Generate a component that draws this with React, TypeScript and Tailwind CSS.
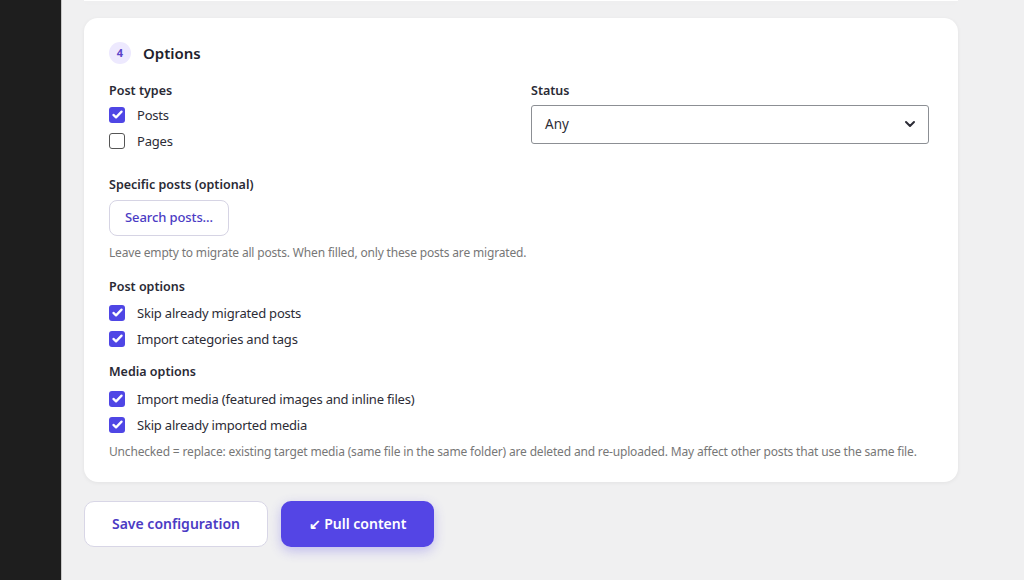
import React, { useState } from 'react';

const FONT = '"Noto Sans", "Open Sans", sans-serif';

interface CheckProps {
  label: string;
  checked: boolean;
  onToggle: () => void;
}

const CheckRow: React.FC<CheckProps> = ({ label, checked, onToggle }) => (
  <label className="flex h-[26px] cursor-pointer items-center" onClick={onToggle}>
    {checked ? (
      <span className="flex h-4 w-4 items-center justify-center rounded-[3px] bg-[#4f46e5]">
        <svg viewBox="0 0 16 16" className="h-[13px] w-[13px]" fill="none" stroke="white" strokeWidth={2.8} strokeLinecap="round" strokeLinejoin="round">
          <path d="M3 8.5l3.2 3L13 4.5" />
        </svg>
      </span>
    ) : (
      <span className="h-4 w-4 rounded-[3px] border-[1.5px] border-[#555] bg-white" />
    )}
    <span className="ml-3 mt-[3px] text-[13px] tracking-[-0.2px] text-[#2c2c36]">{label}</span>
  </label>
);

const Label: React.FC<{ children: React.ReactNode; className?: string }> = ({ children, className = '' }) => (
  <div className={`text-[12.5px] font-semibold leading-[18px] text-[#2a2a35] ${className}`}>{children}</div>
);

const Help: React.FC<{ children: React.ReactNode; className?: string }> = ({ children, className = '' }) => (
  <p className={`text-[12px] leading-[18px] tracking-[-0.17px] text-[#777] ${className}`}>{children}</p>
);

export default function App() {
  const [opts, setOpts] = useState<Record<string, boolean>>({
    posts: true,
    pages: false,
    skipMigrated: true,
    terms: true,
    media: true,
    skipMedia: true,
  });
  const toggle = (k: string) => setOpts((o) => ({ ...o, [k]: !o[k] }));

  return (
    <div className="flex h-[580px] w-[1024px] overflow-hidden bg-[#f0f0f1]" style={{ fontFamily: FONT }}>
      {/* admin sidebar */}
      <div className="w-[61px] shrink-0 bg-[#1e1e1e]" />
      <div className="w-px shrink-0 bg-[#c8c8c8]" />

      <main className="flex flex-col pl-[22px]">
        {/* bottom edge of the previous step card */}
        <div className="h-px w-[874px] bg-white shadow-[0_1px_6px_rgba(0,0,0,0.06)]" />

        <section className="mt-[17px] w-[874px] rounded-[14px] bg-white px-[25px] pb-[21px] pt-[24px] shadow-[0_1px_4px_rgba(0,0,0,0.06)]">
          <div className="flex items-center">
            <span className="flex h-[22px] w-[22px] items-center justify-center rounded-full bg-[#ede9fe] text-[11px] font-bold text-[#5b44c9]">4</span>
            <h2 className="ml-3 text-[15px] font-semibold text-[#1f1f2e]">Options</h2>
          </div>

          <div className="mt-[17px] grid grid-cols-[402px_398px] gap-x-5">
            <div>
              <Label>Post types</Label>
              <div className="mt-[2px]">
                <CheckRow label="Posts" checked={opts.posts} onToggle={() => toggle('posts')} />
                <CheckRow label="Pages" checked={opts.pages} onToggle={() => toggle('pages')} />
              </div>
            </div>
            <div>
              <Label>Status</Label>
              <div className="mt-[5px] flex h-[39px] items-center justify-between rounded-[3px] border border-[#8c8f94] bg-white pl-[13px] pr-[10px]">
                <span className="text-[13.5px] text-[#2c2c36]">Any</span>
                <svg viewBox="0 0 16 16" className="h-4 w-4" fill="none" stroke="#2c2c36" strokeWidth={2} strokeLinecap="round" strokeLinejoin="round">
                  <path d="M4 6l4 4 4-4" />
                </svg>
              </div>
            </div>
          </div>

          <Label className="mt-[22px]">Specific posts (optional)</Label>
          <button className="mt-[6px] h-9 rounded-lg border border-[#d6d4e4] bg-white px-[15px] text-[13px] font-medium tracking-[-0.1px] text-[#4b3bc4]">
            Search posts…
          </button>
          <Help className="mt-2">Leave empty to migrate all posts. When filled, only these posts are migrated.</Help>

          <Label className="mt-4">Post options</Label>
          <div className="mt-[4px]">
            <CheckRow label="Skip already migrated posts" checked={opts.skipMigrated} onToggle={() => toggle('skipMigrated')} />
            <CheckRow label="Import categories and tags" checked={opts.terms} onToggle={() => toggle('terms')} />
          </div>

          <Label className="mt-[11px]">Media options</Label>
          <div className="mt-[5px]">
            <CheckRow label="Import media (featured images and inline files)" checked={opts.media} onToggle={() => toggle('media')} />
            <CheckRow label="Skip already imported media" checked={opts.skipMedia} onToggle={() => toggle('skipMedia')} />
          </div>
          <Help className="mt-[5px]">
            Unchecked = replace: existing target media (same file in the same folder) are deleted and re-uploaded. May affect other posts that use the same file.
          </Help>
        </section>

        <div className="mt-[19px] flex gap-[13px]">
          <button className="h-[46px] w-[184px] rounded-[10px] border border-[#d8d6e6] bg-white text-[14px] font-semibold text-[#4b3bc4]">
            Save configuration
          </button>
          <button className="h-[46px] w-[153px] rounded-[10px] bg-[#5445e5] text-[14px] font-semibold text-white shadow-[0_4px_12px_rgba(84,69,229,0.3)]">
            ↙ Pull content
          </button>
        </div>
      </main>
    </div>
  );
}
